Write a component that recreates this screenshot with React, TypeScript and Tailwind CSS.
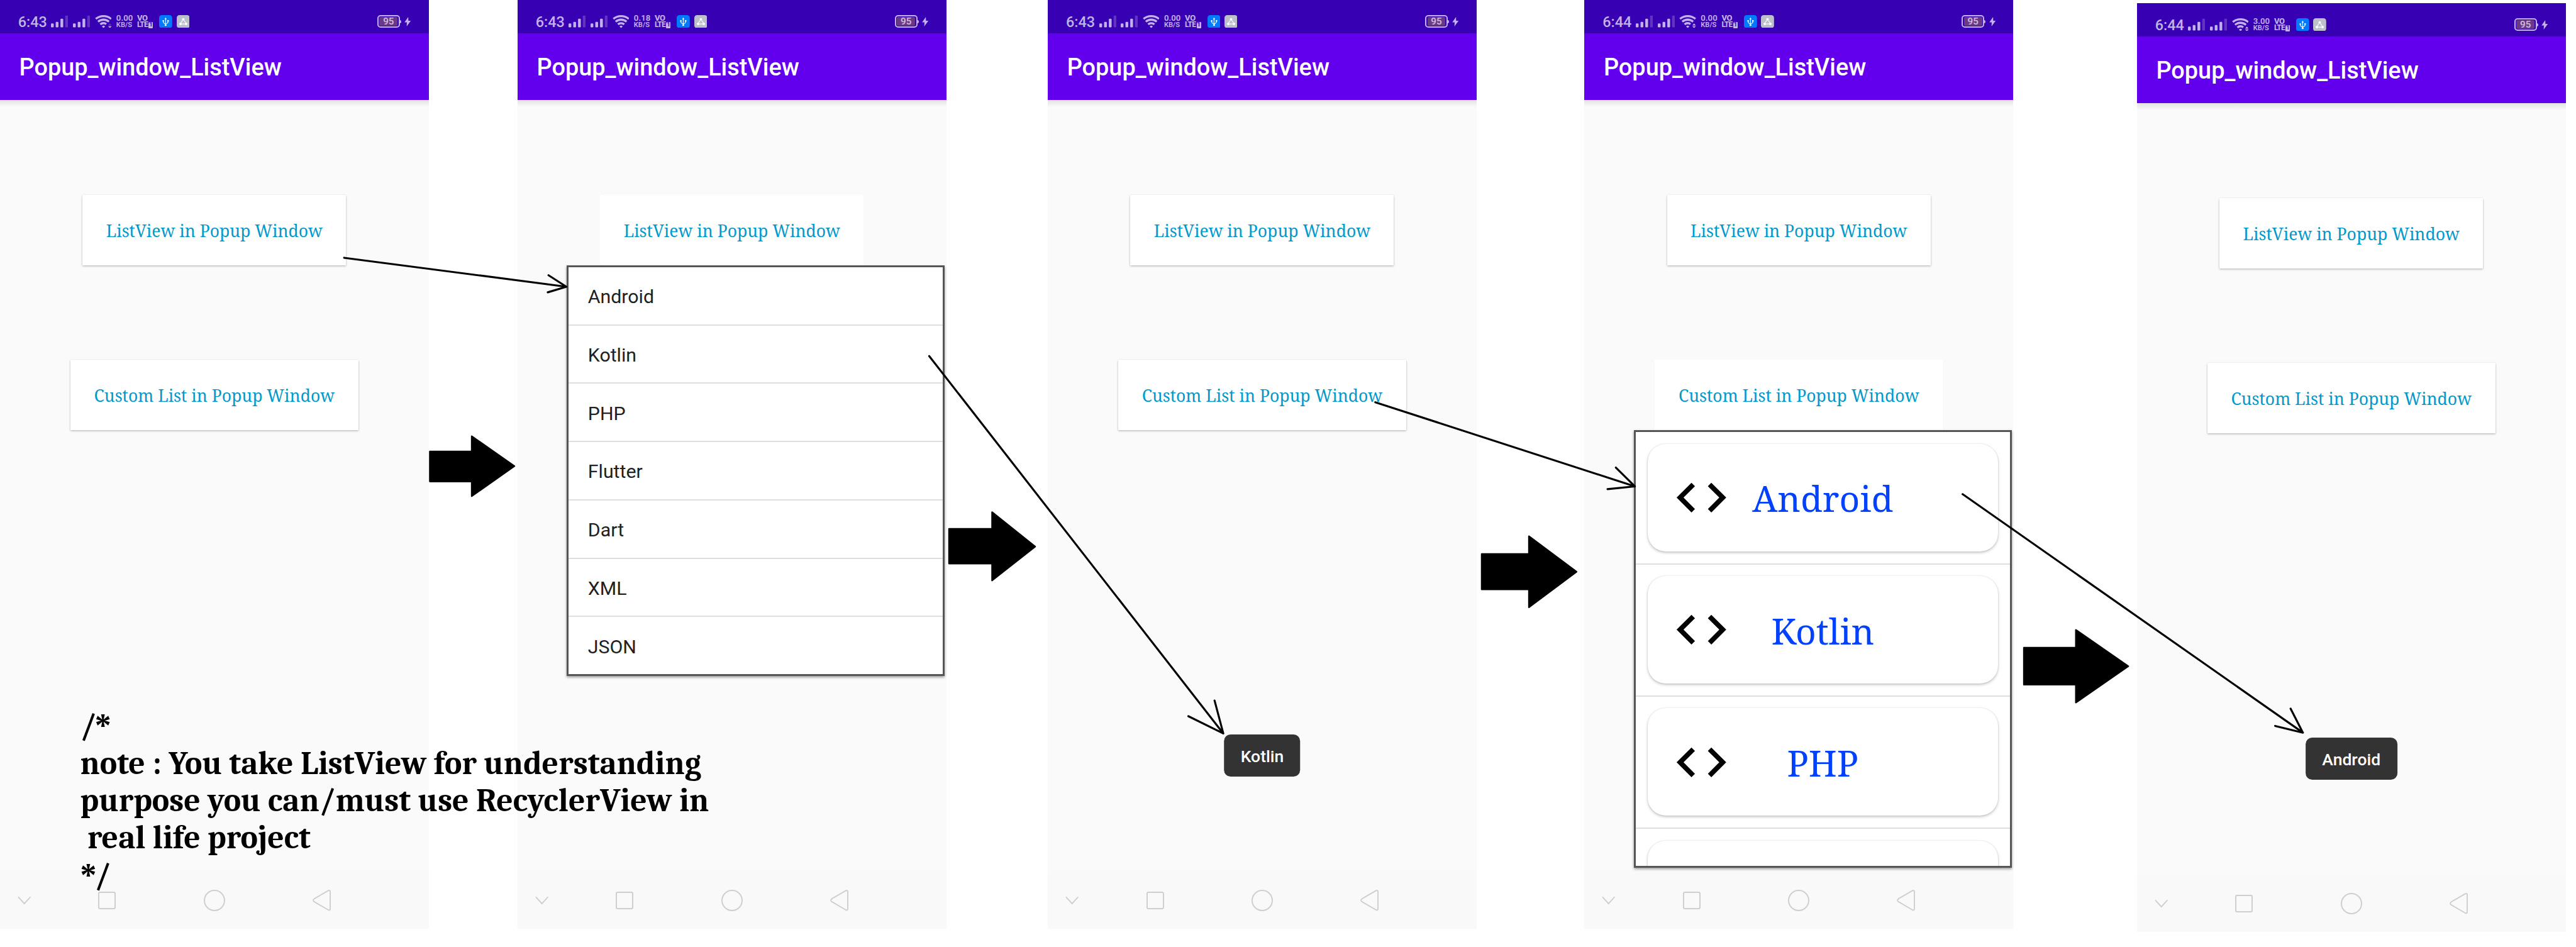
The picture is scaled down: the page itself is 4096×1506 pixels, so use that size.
import { MdCode } from "react-icons/md";
import type { ReactNode } from "react";

type WifiActivity = "none" | "down" | "both";

function SignalBars() {
  return (
    <svg viewBox="0 0 43 32" className="ml-[7.6px] h-[20.2px] w-[27.1px] shrink-0" fill="#c3b1e9">
      <rect x="0" y="21" width="7" height="10" rx="2" />
      <rect x="12" y="17" width="7" height="14" rx="2" />
      <rect x="24" y="9" width="7" height="22" rx="2" />
      <rect x="36" y="1" width="7" height="30" rx="2" fill="#6234c2" />
    </svg>
  );
}

function Wifi({ activity }: { activity: WifiActivity }) {
  return (
    <svg viewBox="0 0 42 33" className="ml-[7.6px] h-[20.8px] w-[26.5px] shrink-0" fill="none" stroke="#c3b1e9" strokeWidth="5.2">
      <path d="M2 9.7A30.4 30.4 0 0 1 41 9.7" />
      <path d="M7.7 16.5A21.5 21.5 0 0 1 35.3 16.5" />
      <path d={activity === "none" ? "M13.5 23.5A12.4 12.4 0 0 1 29.5 23.5" : "M13.5 23.5A12.4 12.4 0 0 1 28.5 22.7"} />
      <path d="M21.5 33L17.5 28.6A5.7 5.7 0 0 1 25.5 28.6Z" fill="#c3b1e9" stroke="none" />
      {activity !== "none" && (
        <g stroke="none">
          <path d="M33 26.2h9l-4.5-5z" fill={activity === "both" ? "#c3b1e9" : "#6234c2"} />
          <path d="M33 28h9l-4.5 5z" fill="#c3b1e9" />
        </g>
      )}
    </svg>
  );
}

function StatusBar({ time, speed, wifi }: { time: string; speed: string; wifi: WifiActivity }) {
  return (
    <div className="flex h-[53px] shrink-0 items-center bg-[#3700b3] pt-[15.1px] pl-[28.8px] pr-[28px] text-[#c3b1e9]">
      <div className="w-[45px] shrink-0 pt-[1.4px] text-[23.4px] leading-[26px] font-medium whitespace-nowrap">{time}</div>
      <SignalBars />
      <SignalBars />
      <Wifi activity={wifi} />
      <div className="ml-[7.6px] w-[25.9px] shrink-0 font-semibold whitespace-nowrap">
        <div className="text-[13.2px] leading-[11.4px]">{speed}</div>
        <div className="text-[11.1px] leading-[11.4px]">KB/S</div>
      </div>
      <div className="ml-[7.2px] w-[27.1px] shrink-0 font-extrabold whitespace-nowrap">
        <div className="text-[13px] leading-[11.4px] tracking-[-0.4px]">VO</div>
        <div className="flex items-center">
          <span className="text-[12px] leading-[11.4px] tracking-[-0.8px]">LTE</span>
          <span className="ml-[1.4px] h-[9.6px] w-[7px] rounded-[1px] rounded-tl-[3px] bg-[#c3b1e9] text-center text-[8.5px] leading-[9.8px] text-[#3700b3]">1</span>
        </div>
      </div>
      <svg viewBox="0 0 33 33" className="ml-[8.4px] size-[20.8px] shrink-0">
        <rect width="33" height="33" rx="7" fill="#007aff" />
        <g fill="none" stroke="#fff" strokeWidth="1.8">
          <path d="M16.5 8V25M10.5 14v2.5q0 4 6 5.5M22.5 14v2.5q0 4-6 5.5" />
        </g>
        <path d="M13.8 10.8h5.4l-2.7-4.9z" fill="#fff" />
        <circle cx="16.5" cy="25" r="2.5" fill="#fff" />
        <circle cx="10.5" cy="14.5" r="2" fill="#fff" />
        <rect x="20.6" y="12.6" width="3.8" height="3.8" fill="#fff" />
      </svg>
      <svg viewBox="0 0 33 33" className="ml-[6.3px] size-[20.8px] shrink-0">
        <rect width="33" height="33" rx="7" fill="#bbc0cb" />
        <path d="M14.5 13.5L10.8 19M18.8 13.5L22.4 19M13 22.4h7.5" stroke="#fff" strokeWidth="1.8" fill="none" />
        <g fill="#fff">
          <circle cx="16.6" cy="10.6" r="3.2" />
          <circle cx="9.6" cy="22.2" r="3.2" />
          <circle cx="23.8" cy="22.2" r="3.2" />
        </g>
      </svg>
      <div className="ml-auto flex h-[20.6px] w-[36px] shrink-0 items-center rounded-[5px] border-[2.2px] border-[#c3b1e9] p-[1.6px]">
        <div className="flex h-full w-full items-center justify-center rounded-[2px] bg-[#6b3a86] pt-[1.6px] text-[15.2px] leading-none font-semibold text-[#cdb8dc]">95</div>
      </div>
      <div className="h-[5px] w-[1.8px] shrink-0 rounded-r-[2px] bg-[#c3b1e9]" />
      <svg viewBox="0 0 16 24" className="ml-[5.6px] h-[15px] w-[10.4px] shrink-0" fill="#c3b1e9">
        <path d="M9.5 0L0 13.5h6L5.5 24L16 9.5h-6.2z" />
      </svg>
    </div>
  );
}

function NavBar() {
  return (
    <div className="flex h-[91.5px] shrink-0 items-center bg-[#f9f9f9] pt-[1.6px] pl-[27.6px]">
      <svg viewBox="0 0 34 22" className="h-[13.9px] w-[21.4px]" fill="none" stroke="#cfcfcf" strokeWidth="3">
        <path d="M1.5 2L17 19L32.5 2" />
      </svg>
      <div className="ml-[107.5px] size-[28px] rounded-[3px] border-2 border-[#cfcfcf]" />
      <div className="ml-[139.2px] size-[34.3px] rounded-full border-2 border-[#cfcfcf]" />
      <svg viewBox="0 0 46 53" className="ml-[138.6px] h-[33.4px] w-[29px]" fill="none" stroke="#cfcfcf" strokeWidth="3.1" strokeLinejoin="round">
        <path d="M39.5 2.2L4.5 22.5Q-1 26.5 4.5 30.5L39.5 50.8Q44.5 52.5 44.5 48V5Q44.5 .5 39.5 2.2Z" />
      </svg>
    </div>
  );
}

function PopupButton({ label, wide, flat }: { label: string; wide?: boolean; flat?: boolean }) {
  return (
    <button
      className={`flex h-[111.8px] shrink-0 items-center justify-center bg-white pt-[4px] font-['Noto_Serif',serif] text-[26.5px] whitespace-nowrap text-[#0099cc] ${wide ? "w-[458.2px]" : "w-[419px]"} ${flat ? "" : "shadow-[0_1.5px_3px_rgba(0,0,0,0.22),0_0_2px_rgba(0,0,0,0.12)]"}`}
    >
      {label}
    </button>
  );
}

interface PhoneProps {
  time: string;
  speed: string;
  wifi: WifiActivity;
  className?: string;
  flat?: "list" | "custom";
  children?: ReactNode;
}

function Phone({ time, speed, wifi, className = "", flat, children }: PhoneProps) {
  return (
    <section className={`relative flex h-[1476.8px] w-[681.6px] shrink-0 flex-col bg-[#fafafa] ${className}`}>
      <StatusBar time={time} speed={speed} wifi={wifi} />
      <header className="flex h-[106px] shrink-0 items-center bg-[#6200ee] pt-[4.4px] pl-[30.5px] text-[37.87px] leading-none font-medium text-white">
        Popup_window_ListView
      </header>
      <div className="h-[11px] shrink-0 bg-linear-to-b from-[#e2e2e2] to-[#fafafa]" />
      <main className="flex flex-1 flex-col items-center gap-[150.8px] pt-[139.8px]">
        <PopupButton label="ListView in Popup Window" flat={flat === "list"} />
        <PopupButton label="Custom List in Popup Window" wide flat={flat === "custom"} />
      </main>
      <NavBar />
      {children}
    </section>
  );
}

const popupFrame = "absolute left-[78.3px] w-[601.2px] overflow-hidden border-3 border-[#555] bg-white shadow-[0_2px_4px_rgba(0,0,0,0.4)]";

function SimpleListPopup() {
  const items = ["Android", "Kotlin", "PHP", "Flutter", "Dart", "XML", "JSON"];
  return (
    <ul className={`${popupFrame} top-[421.8px] h-[653px]`}>
      {items.map((item) => (
        <li key={item} className="flex h-[92.78px] items-center border-b-2 border-[#dedede] pt-[4px] pl-[30.5px] text-[30.3px] leading-none text-[#212121]">
          {item}
        </li>
      ))}
    </ul>
  );
}

function CustomListPopup() {
  const items = ["Android", "Kotlin", "PHP", ""];
  return (
    <ul className={`${popupFrame} top-[684.4px] h-[696px]`}>
      {items.map((item, i) => (
        <li key={i} className="h-[210.2px] border-b-2 border-[#dedede] px-[18.9px] pt-[18.6px]">
          <div className="grid h-[171px] items-center rounded-[28.4px] bg-white shadow-[0_2px_4px_rgba(0,0,0,0.24),0_0_2px_rgba(0,0,0,0.12)]">
            {item && (
              <>
                <MdCode className="col-start-1 row-start-1 ml-[38.3px] size-[94.7px] text-black" />
                <span className="col-start-1 row-start-1 pt-[2.6px] text-center font-['Noto_Serif',serif] text-[56.8px] leading-none text-[#0040ff]">{item}</span>
              </>
            )}
          </div>
        </li>
      ))}
    </ul>
  );
}

function Toast({ children }: { children: string }) {
  return (
    <div className="absolute top-[1168.4px] left-1/2 flex h-[66.6px] -translate-x-1/2 items-center rounded-[10.5px] bg-[#333] px-[26.5px] pt-[2.4px] text-[26.5px] leading-none font-medium text-white">
      {children}
    </div>
  );
}

/* Block arrows between the screens and thin arrows linking a tap to its result. */
function Annotations() {
  return (
    <svg viewBox="0 0 6490 2386" className="pointer-events-none absolute inset-0 h-[1506px] w-[4096px]" preserveAspectRatio="none">
      <g fill="#000" stroke="#000" strokeWidth="4" strokeLinejoin="round">
        <path d="M1083 1137.5H1188.5V1099L1296 1174.5L1188.5 1250V1213H1083Z" />
        <path d="M2391 1332.5H2499.5V1290.5L2608 1377L2499.5 1462.5V1420H2391Z" />
        <path d="M3733 1396H3852V1351L3972 1440.5L3852 1530V1485H3733Z" />
        <path d="M5099 1632H5230V1587L5362 1678.5L5230 1770V1725H5099Z" />
      </g>
      <g fill="none" stroke="#000" strokeWidth="5" strokeLinecap="round" strokeLinejoin="round">
        <path d="M867 649.5L1427 722.5M1382 693.5L1427 722.5L1380 736.5" />
        <path d="M2341 897L3082 1848M3060 1765L3082 1848L2994 1804.5" />
        <path d="M3465 1013.5L4119 1225.5M4071 1178L4119 1225.5L4050 1232.5" />
        <path d="M4944.5 1245L5802 1846M5771 1785.5L5802 1846L5732 1829" />
      </g>
    </svg>
  );
}

function Note() {
  return (
    <div className="absolute top-[1125.4px] left-[127.5px] font-[Cambria,Caladea,serif] text-[51.75px] leading-[59.3px] font-bold whitespace-pre text-black">
      <p>
        /<span className="-ml-[3px] font-['Liberation_Serif',serif] leading-none">*</span>
      </p>
      <p>note : You take ListView for understanding</p>
      <p>purpose you can/must use RecyclerView in</p>
      <p>{" real life project"}</p>
      <p>
        <span className="-mr-[3px] font-['Liberation_Serif',serif] leading-none">*</span>/
      </p>
    </div>
  );
}

export default function App() {
  return (
    <div className="relative flex h-[1506px] w-[4096px] items-start overflow-hidden bg-white font-[Roboto,sans-serif]">
      <Phone time="6:43" speed="0.00" wifi="down" />
      <Phone time="6:43" speed="0.18" wifi="none" className="ml-[141.4px]" flat="list">
        <SimpleListPopup />
      </Phone>
      <Phone time="6:43" speed="0.00" wifi="none" className="ml-[161.6px]">
        <Toast>Kotlin</Toast>
      </Phone>
      <Phone time="6:44" speed="0.00" wifi="both" className="ml-[171.7px]" flat="custom">
        <CustomListPopup />
      </Phone>
      <Phone time="6:44" speed="3.00" wifi="both" className="mt-[5px] ml-[196.9px]">
        <Toast>Android</Toast>
      </Phone>
      <Note />
      <Annotations />
    </div>
  );
}
